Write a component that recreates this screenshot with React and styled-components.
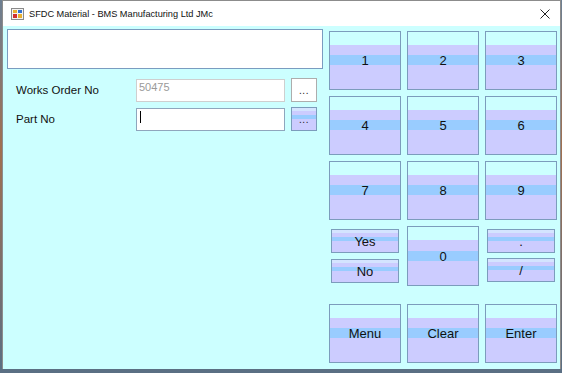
import React from 'react';
import styled, { createGlobalStyle, css } from 'styled-components';

const GlobalStyle = createGlobalStyle`
  html, body {
    margin: 0;
    padding: 0;
    background: #4a5560;
    overflow: hidden;
  }
`;

const Screen = styled.div`
  display: flex;
  width: 562px;
  height: 373px;
  background: linear-gradient(180deg, #6d7f92 0%, #a07050 40%, #5a6f84 100%);
`;

const Window = styled.div`
  margin-left: 2px;
  width: 557px;
  height: 368px;
  display: flex;
  flex-direction: column;
  border: 1px solid #8c8c8c;
  border-bottom: none;
  background: #ccffff;
  font-family: "Liberation Sans", Arial, sans-serif;
`;

const TitleBar = styled.div`
  height: 25px;
  flex: 0 0 25px;
  display: flex;
  align-items: center;
  background: #ffffff;
  padding-left: 8px;
`;

const TitleText = styled.span`
  margin-left: 5px;
  font-family: "Liberation Sans", Arial, sans-serif;
  font-size: 9.2px;
  color: #111;
`;

const CloseBox = styled.div`
  margin-left: auto;
  width: 30px;
  display: flex;
  justify-content: center;
  align-items: center;
`;

const Client = styled.div`
  flex: 1;
  display: flex;
`;

const LeftPanel = styled.div`
  width: 326px;
  display: flex;
  flex-direction: column;
  padding: 3px 0 0 4px;
  box-sizing: border-box;
`;

const MessageBox = styled.div`
  width: 314px;
  height: 38px;
  background: #fff;
  border: 1px solid #7a9cc0;
`;

const FieldRow = styled.div`
  display: flex;
  align-items: center;
  height: 24px;
  margin-top: ${p => p.$top}px;
`;

const Label = styled.span`
  width: 129px;
  padding-left: 9px;
  box-sizing: border-box;
  font-size: 11.5px;
  color: #111;
`;

const TextInput = styled.div`
  width: 149px;
  height: 23px;
  box-sizing: border-box;
  background: #fff;
  border: 1px solid ${p => (p.$disabled ? '#cfcfcf' : '#8fa6bd')};
  color: #9a9a9a;
  font-size: 11px;
  padding: 1px 2px;
  display: flex;
  align-items: flex-start;
`;

const Caret = styled.span`
  display: block;
  width: 1px;
  height: 12px;
  margin: 1px 0 0 1px;
  background: #000;
`;

const bigBands = css`
  background: linear-gradient(
    180deg,
    #ccffff 0%, #ccffff 22%,
    #ccccff 22%, #ccccff 41%,
    #99ccff 41%, #99ccff 58%,
    #ccccff 58%, #ccccff 100%
  );
`;

const smallBands = css`
  background: linear-gradient(
    180deg,
    #d4e4ff 0%, #d4e4ff 14%,
    #ccccff 14%, #ccccff 34%,
    #99ccff 34%, #99ccff 50%,
    #ccccff 50%, #ccccff 100%
  );
`;

const DotsButton = styled.div`
  width: 26px;
  height: 24px;
  margin-left: 6px;
  box-sizing: border-box;
  display: flex;
  justify-content: center;
  align-items: flex-end;
  padding-bottom: 5px;
  font-size: 10px;
  letter-spacing: 0.5px;
  color: #222;
  border: 1px solid ${p => (p.$plain ? '#adadad' : '#7c9cbc')};
  ${p => (p.$plain ? 'background: #fff;' : smallBands)}
`;

const Keypad = styled.div`
  margin: 5px 0 0 0;
  display: grid;
  grid-template-columns: repeat(3, 72px);
  grid-template-rows: 59px 59px 59px 60px 6px 59px;
  column-gap: 6px;
  row-gap: 6px;
  align-content: start;
`;

const Key = styled.div`
  box-sizing: border-box;
  border: 1px solid #7c9cbc;
  display: flex;
  justify-content: center;
  align-items: center;
  font-size: 13px;
  color: #111;
  ${p => (p.$small ? smallBands : bigBands)}
  ${p => p.$small && css`height: 24px;`}
  ${p => p.$row && css`grid-row: ${p.$row};`}
`;

const KeyStack = styled.div`
  display: flex;
  flex-direction: column;
  gap: ${p => p.$gap}px;
  padding: 3px 2px;
`;

const Icon = () => (
  <svg width="13" height="12" viewBox="0 0 13 12">
    <rect x="0.5" y="0.5" width="12" height="11" fill="#f4f4f4" stroke="#8a8a8a" />
    <rect x="2" y="2" width="4" height="3" fill="#e8b030" />
    <rect x="7" y="2" width="4" height="3" fill="#3070d0" />
    <rect x="2" y="6" width="4" height="4" fill="#d03030" />
    <rect x="7" y="6" width="4" height="4" fill="#e8b030" />
  </svg>
);

const CloseIcon = () => (
  <svg width="10" height="10" viewBox="0 0 10 10">
    <path d="M0.5 0.5 L9.5 9.5 M9.5 0.5 L0.5 9.5" stroke="#222" strokeWidth="1" />
  </svg>
);

const digits = ['1', '2', '3', '4', '5', '6', '7', '8', '9'];

export default function App() {
  return (
    <>
      <GlobalStyle />
      <Screen>
        <Window>
          <TitleBar>
            <Icon />
            <TitleText>SFDC Material - BMS Manufacturing Ltd JMc</TitleText>
            <CloseBox>
              <CloseIcon />
            </CloseBox>
          </TitleBar>
          <Client>
            <LeftPanel>
              <MessageBox />
              <FieldRow $top={9}>
                <Label>Works Order No</Label>
                <TextInput $disabled>50475</TextInput>
                <DotsButton $plain>...</DotsButton>
              </FieldRow>
              <FieldRow $top={5}>
                <Label>Part No</Label>
                <TextInput>
                  <Caret />
                </TextInput>
                <DotsButton>...</DotsButton>
              </FieldRow>
            </LeftPanel>
            <Keypad>
              {digits.map(d => (
                <Key key={d}>{d}</Key>
              ))}
              <KeyStack $gap={6}>
                <Key $small>Yes</Key>
                <Key $small>No</Key>
              </KeyStack>
              <Key>0</Key>
              <KeyStack $gap={5}>
                <Key $small>.</Key>
                <Key $small>/</Key>
              </KeyStack>
              <Key $row={6}>Menu</Key>
              <Key $row={6}>Clear</Key>
              <Key $row={6}>Enter</Key>
            </Keypad>
          </Client>
        </Window>
      </Screen>
    </>
  );
}
